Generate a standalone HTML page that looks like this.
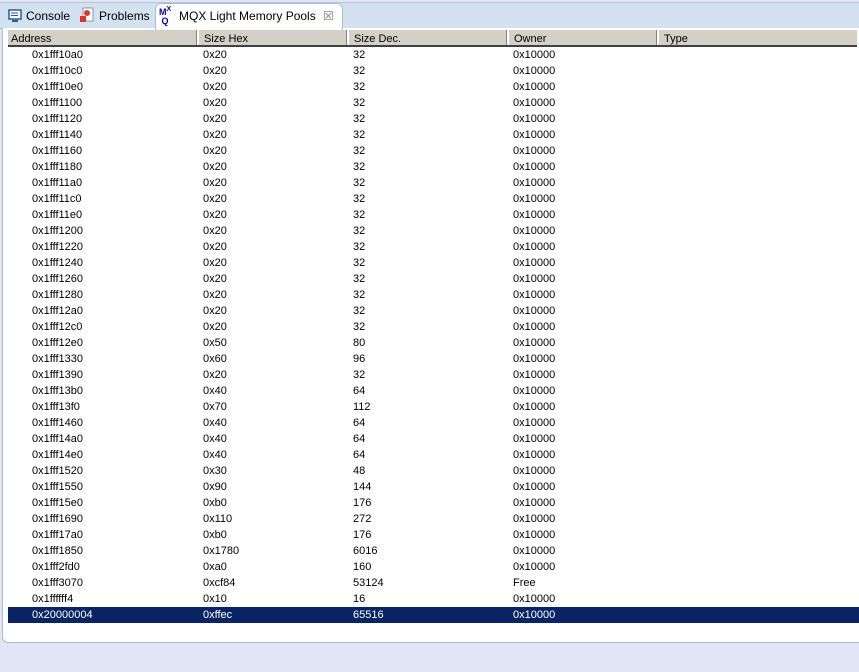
<!DOCTYPE html>
<html><head><style>
body{margin:0;width:859px;height:672px;background:#e1e5f5;font-family:"Liberation Sans",sans-serif;font-size:11px;position:relative;overflow:hidden}
.bar{position:absolute;left:0;top:2px;width:859px;height:25px;background:#d2e2f1;border-top:1px solid #b9c6d6;border-bottom:1px solid #aab8cc}
.tab{position:absolute;top:6px;height:20px;line-height:20px;font-size:12px;color:#000}
.act{position:absolute;left:155px;top:3px;width:186px;height:26px;background:#fff;border:1px solid #b0bccc;border-bottom:none;border-radius:6px 6px 0 0}
.panel{position:absolute;left:2px;top:28px;width:860px;height:614px;background:#fff;border-left:1px solid #b0bccc;border-bottom:1px solid #b0bccc;border-radius:0 0 0 6px}
.hdr{position:absolute;left:8px;top:30px;width:849px;height:15px;background:#d4d0c8;border-bottom:2px solid #404040}
.hdr div{position:absolute;top:0;height:15px;line-height:18px;padding-left:5px;border-left:2px solid #fff;box-shadow:-1px 0 0 #808080}
.row{position:absolute;left:8px;width:851px;height:16px;line-height:17px}
.row span{position:absolute;top:0}
.sel{background:#0a2463;color:#fff}
</style></head><body>
<div class="bar"></div>
<div class="panel"></div>
<div class="act"></div>
<svg style="position:absolute;left:8px;top:9px" width="14" height="13"><rect x="1" y="1" width="12" height="9" fill="#fff" stroke="#2a5a9a" stroke-width="1.5"/><line x1="3" y1="4" x2="10" y2="4" stroke="#2a5a9a"/><line x1="3" y1="6.5" x2="10" y2="6.5" stroke="#2a5a9a"/><rect x="4" y="11" width="6" height="2" fill="#2a5a9a"/></svg>
<div class="tab" style="left:26px">Console</div>
<svg style="position:absolute;left:80px;top:7px" width="15" height="17"><rect x="3" y="1" width="10" height="13" fill="#fff" stroke="#999"/><circle cx="7" cy="6" r="3" fill="#d33"/><rect x="0" y="9" width="6" height="6" fill="#d33"/></svg>
<div class="tab" style="left:99px">Problems</div>
<div class="tab" style="left:159px;top:5px;font-size:9px;color:#00a;font-weight:bold;line-height:9px">M<sup style="font-size:7px">X</sup><br>&nbsp;Q</div>
<div class="tab" style="left:179px">MQX Light Memory Pools</div>
<div class="tab" style="left:323px;color:#777">&#x2612;</div>
<div class="hdr">
<div style="left:-2px;border-left:none;box-shadow:none">Address</div>
<div style="left:189px">Size Hex</div>
<div style="left:339px">Size Dec.</div>
<div style="left:499px">Owner</div>
<div style="left:649px">Type</div>
</div>
<div id="rows"></div>
<script>
var d=[["0x1fff10a0","0x20","32"],["0x1fff10c0","0x20","32"],["0x1fff10e0","0x20","32"],["0x1fff1100","0x20","32"],["0x1fff1120","0x20","32"],["0x1fff1140","0x20","32"],["0x1fff1160","0x20","32"],["0x1fff1180","0x20","32"],["0x1fff11a0","0x20","32"],["0x1fff11c0","0x20","32"],["0x1fff11e0","0x20","32"],["0x1fff1200","0x20","32"],["0x1fff1220","0x20","32"],["0x1fff1240","0x20","32"],["0x1fff1260","0x20","32"],["0x1fff1280","0x20","32"],["0x1fff12a0","0x20","32"],["0x1fff12c0","0x20","32"],["0x1fff12e0","0x50","80"],["0x1fff1330","0x60","96"],["0x1fff1390","0x20","32"],["0x1fff13b0","0x40","64"],["0x1fff13f0","0x70","112"],["0x1fff1460","0x40","64"],["0x1fff14a0","0x40","64"],["0x1fff14e0","0x40","64"],["0x1fff1520","0x30","48"],["0x1fff1550","0x90","144"],["0x1fff15e0","0xb0","176"],["0x1fff1690","0x110","272"],["0x1fff17a0","0xb0","176"],["0x1fff1850","0x1780","6016"],["0x1fff2fd0","0xa0","160"],["0x1fff3070","0xcf84","53124","Free"],["0x1ffffff4","0x10","16"],["0x20000004","0xffec","65516"]];
var h="";d.forEach(function(r,i){h+='<div class="row'+(i==35?' sel':'')+'" style="top:'+(47+i*16)+'px"><span style="left:24px">'+r[0]+'</span><span style="left:195px">'+r[1]+'</span><span style="left:345px">'+r[2]+'</span><span style="left:505px">'+(r[3]||"0x10000")+'</span></div>';});
document.getElementById("rows").innerHTML=h;
</script>
</body></html>
